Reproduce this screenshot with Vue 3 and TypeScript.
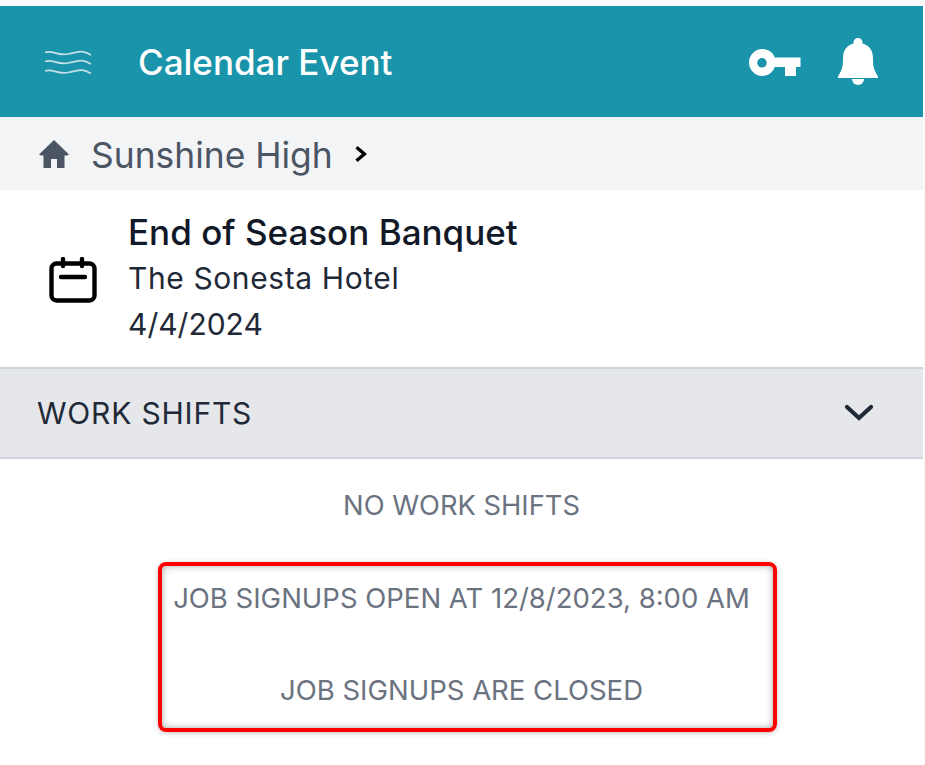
<script setup lang="ts">
const title = 'Calendar Event'
</script>

<template>
  <div class="page">
    <div class="screen">
      <header class="topbar">
        <svg class="waves" viewBox="0 0 48 28" fill="none" stroke="#c4e0e6" stroke-width="1.700">
          <path d="M1 4.500C9 1.500 12 8 24 6S37 1.500 47 7" />
          <path d="M1 13.500C9 10.500 12 17 24 15S37 10.500 47 16" />
          <path d="M1 23C9 20 12 26.500 24 24.500S37 20 47 25.500" />
        </svg>
        <h1 class="title">{{ title }}</h1>
        <svg class="key" viewBox="0 0 52 28" fill="#fff">
          <path fill-rule="evenodd" d="M13.500 1C19.200 1 24 4.500 25.800 9.500H51.500V19H47V28H36V19H25.800C24 24 19.200 28 13.500 28C6 28 0 22 0 14.500S6 1 13.500 1ZM13 10A4.800 4.800 0 1 0 13 19.600A4.800 4.800 0 1 0 13 10Z" />
        </svg>
        <svg class="bell" viewBox="0 0 40 48" fill="#fff">
          <path d="M20 0a4.500 4.500 0 0 1 4.500 4.500v1C31 7.500 35 12 35 20c0 8 .500 11 5 18.500V40H0v-1.500C4.500 31 5 28 5 20 5 12 9 7.500 15.500 5.500v-1A4.500 4.500 0 0 1 20 0Z" />
          <path d="M14 41h12a6 6 0 0 1-12 0Z" />
        </svg>
      </header>

      <nav class="crumbs">
        <svg class="home" viewBox="0 0 30 28" fill="#4b5563">
          <path d="M15 0 30 14.500 28 15.500H25.500V28H18V19H12V28H4.500V15.500H2L0 14.500Z" />
        </svg>
        <span class="crumb">Sunshine High</span>
        <svg class="chev-right" viewBox="0 0 12 16" fill="none" stroke="#000" stroke-width="3">
          <path d="M2 2 9 8 2 14" />
        </svg>
      </nav>

      <section class="event">
        <svg class="cal" viewBox="0 0 48 46" fill="none" stroke="#000" stroke-width="4.400" stroke-linecap="round">
          <rect x="2.500" y="6.500" width="43" height="37" rx="5" />
          <path d="M14 2V9M33 2V9M12 20H36" />
        </svg>
        <div class="event-text">
          <div class="event-name">End of Season Banquet</div>
          <div class="event-line venue">The Sonesta Hotel</div>
          <div class="event-line">4/4/2024</div>
        </div>
      </section>

      <div class="shifts">
        <span>WORK SHIFTS</span>
        <svg class="chev-down" viewBox="0 0 30 20" fill="none" stroke="#1f2937" stroke-width="4.200" stroke-linecap="round">
          <path d="M3 4 15 15 27 4" />
        </svg>
      </div>

      <div class="messages">
        <p class="none">NO WORK SHIFTS</p>
        <p class="msg first">JOB SIGNUPS OPEN AT 12/8/2023, 8:00 AM</p>
        <p class="msg second">JOB SIGNUPS ARE CLOSED</p>
        <div class="highlight"></div>
      </div>
    </div>
  </div>
</template>

<style>
html, body { margin: 0; background: #fff; }
</style>

<style scoped>
.page {
  width: 925px;
  height: 765px;
  overflow: hidden;
  background: #fbfbfd;
  padding-top: 6px;
  box-sizing: border-box;
  font-family: Inter, "Liberation Sans", sans-serif;
}
.screen { width: 923px; height: 759px; background: #fff; }
.topbar {
  height: 111px;
  background: #1a94aa;
  display: flex;
  align-items: center;
  padding: 0 45px 0 44px;
  box-sizing: border-box;
}
.waves { width: 48px; height: 28px; margin-top: 1px; }
.title {
  margin: 0 0 0 46px;
  flex: 1;
  font-size: 35px;
  font-weight: 500;
  color: #fff;
}
.key { width: 52px; height: 28px; margin-right: 37px; }
.bell { width: 40px; height: 48px; }
.crumbs {
  height: 73px;
  background: #f3f4f6;
  display: flex;
  align-items: center;
  padding-left: 39px;
}
.home { width: 30px; height: 28px; }
.crumb { margin-left: 22px; margin-top: 3px; font-size: 35.400px; color: #4b5563; }
.chev-right { width: 14px; height: 18px; margin-left: 21px; }
.event {
  height: 177px;
  display: flex;
  align-items: center;
  padding-left: 49px;
  box-sizing: border-box;
}
.cal { width: 48px; height: 46px; margin-top: 2px; }
.event-text { margin-left: 31px; }
.event-name { font-size: 35px; font-weight: 500; color: #111827; line-height: 45px; }
.event-line { font-size: 30px; color: #1f2937; line-height: 46px; }
.venue { letter-spacing: .6px; }
.shifts {
  height: 92px;
  box-sizing: border-box;
  background: #e5e7eb;
  border-top: 2px solid #d1d5db;
  border-bottom: 2px solid #d1d5db;
  display: flex;
  align-items: center;
  justify-content: space-between;
  padding: 0 49px 0 37px;
  font-size: 30px;
  letter-spacing: .8px;
  color: #1f2937;
}
.chev-down { width: 30px; height: 20px; }
.messages {
  position: relative;
  text-align: center;
  padding-top: 27px;
}
.messages p { margin: 0; line-height: 40px; }
.none { font-size: 27.300px; color: #6b7280; }
.msg { font-size: 27.500px; color: #6b7280; }
.first { margin-top: 52px !important; }
.second { margin-top: 52px !important; }
.highlight {
  position: absolute;
  left: 158px;
  top: 103px;
  width: 619px;
  height: 170px;
  box-sizing: border-box;
  border: 4px solid #fe0000;
  border-radius: 8px;
  box-shadow: inset 0 0 7px rgba(0, 0, 0, .35), 0 1px 5px rgba(0, 0, 0, .25);
}
</style>
